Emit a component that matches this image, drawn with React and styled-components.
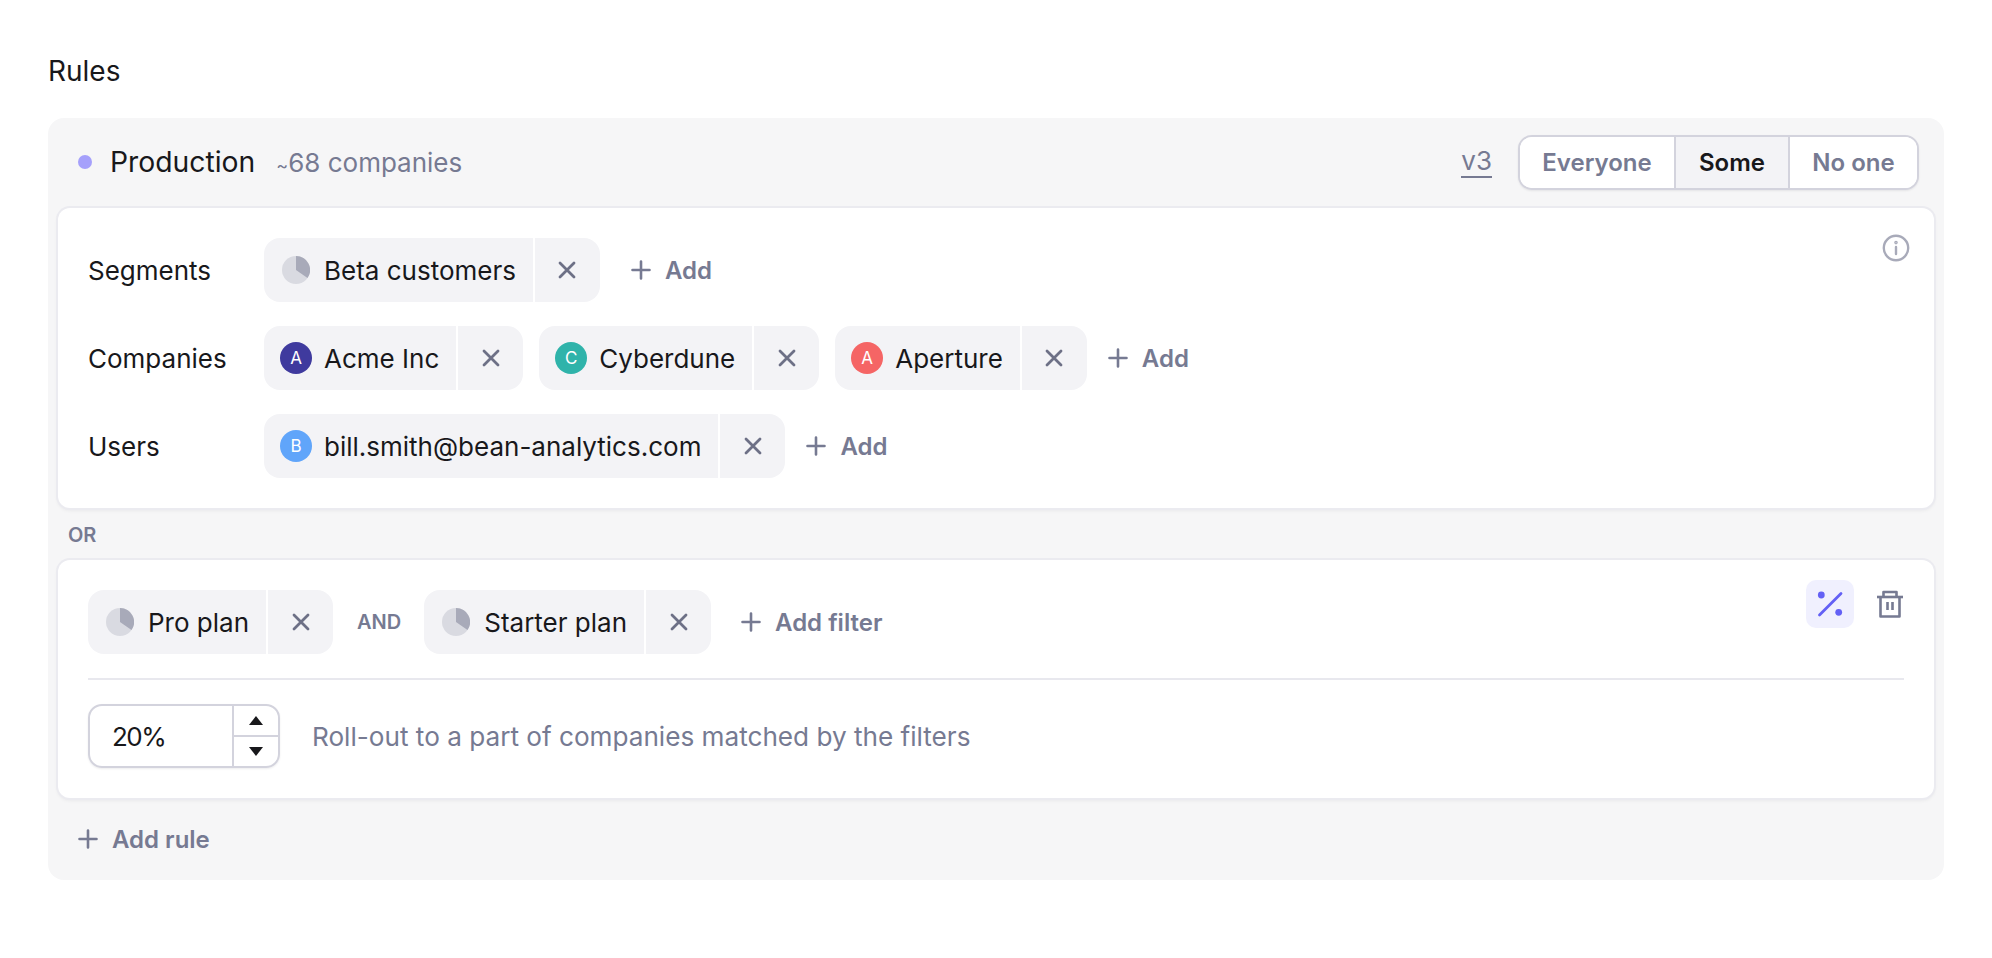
import React from 'react'
import styled, { createGlobalStyle } from 'styled-components'

const GlobalStyle = createGlobalStyle`
  body {
    margin: 0;
    background: #fff;
    font-family: 'Inter', 'Liberation Sans', sans-serif;
    color: #18181b;
  }
`

const XIcon = () => (
  <svg width="24" height="24" viewBox="0 0 24 24" fill="none" stroke="#6d7086" strokeWidth="2.8" strokeLinecap="round">
    <path d="M5 5 L19 19 M19 5 L5 19" />
  </svg>
)

const PlusIcon = () => (
  <svg width="24" height="24" viewBox="0 0 24 24" fill="none" stroke="#767a92" strokeWidth="2.6" strokeLinecap="round">
    <path d="M12 3.5 V20.5 M3.5 12 H20.5" />
  </svg>
)

const PieIcon = () => (
  <svg width="28" height="28" viewBox="0 0 28 28">
    <circle cx="14" cy="14" r="14" fill="#d9dae1" />
    <path d="M14 14 V0 A14 14 0 0 1 25.5 22 Z" fill="#a8aab9" />
  </svg>
)

const InfoIcon = () => (
  <svg width="28" height="28" viewBox="0 0 28 28" fill="none" stroke="#a8aab9" strokeWidth="2.4" strokeLinecap="round">
    <circle cx="14" cy="14" r="12.2" />
    <path d="M14 13 V20" />
    <circle cx="14" cy="8.6" r="0.6" fill="#a8aab9" />
  </svg>
)

const PercentIcon = () => (
  <svg width="28" height="28" viewBox="0 0 28 28" fill="none">
    <path d="M3.5 25 L25 3.5" stroke="#6360f5" strokeWidth="2.8" strokeLinecap="round" />
    <circle cx="5.3" cy="5" r="3.4" fill="#6360f5" />
    <circle cx="22.7" cy="22.3" r="3.4" fill="#6360f5" />
  </svg>
)

const TrashIcon = () => (
  <svg width="28" height="28" viewBox="0 0 28 28" fill="none" stroke="#767a92" strokeWidth="2.6" strokeLinejoin="round">
    <path d="M1 7 H27" />
    <path d="M7.5 7 V2 H20.5 V7" />
    <path d="M4.5 7 V26.5 H23.5 V7" />
    <path d="M11.5 12 V20 M16.5 12 V20" />
  </svg>
)

const Tag = ({ icon, letter, color, children }) => (
  <Chip>
    <ChipBody>
      {icon ? <PieSlot><PieIcon /></PieSlot> : <Avatar $color={color}>{letter}</Avatar>}
      {children}
    </ChipBody>
    <ChipClose><XIcon /></ChipClose>
  </Chip>
)

const AddLink = ({ children, $left }) => (
  <AddButton $left={$left}>
    <PlusIcon />
    {children}
  </AddButton>
)

const App = () => {
  return (
    <>
      <GlobalStyle />
      <Page>
        <Heading>Rules</Heading>
        <Panel>
          <PanelHeader>
            <Dot />
            <EnvName>Production</EnvName>
            <EnvCount><small>~</small>68 companies</EnvCount>
            <Version>v3</Version>
            <Segmented>
              <SegmentItem $width={154}>Everyone</SegmentItem>
              <SegmentItem $width={114} $active>Some</SegmentItem>
              <SegmentItem $width={129}>No one</SegmentItem>
            </Segmented>
          </PanelHeader>

          <Card>
            <TargetRow>
              <RowLabel>Segments</RowLabel>
              <Tag icon>Beta customers</Tag>
              <AddLink $left={13}>Add</AddLink>
              <InfoSlot><InfoIcon /></InfoSlot>
            </TargetRow>
            <TargetRow>
              <RowLabel>Companies</RowLabel>
              <Tag letter="A" color="#3f3a9e">Acme Inc</Tag>
              <Tag letter="C" color="#2fb3aa">Cyberdune</Tag>
              <Tag letter="A" color="#f56565">Aperture</Tag>
              <AddLink $left={3}>Add</AddLink>
            </TargetRow>
            <TargetRow>
              <RowLabel>Users</RowLabel>
              <Tag letter="B" color="#60a5fa">bill.smith@bean-analytics.com</Tag>
              <AddLink $left={3}>Add</AddLink>
            </TargetRow>
          </Card>

          <OrLabel>OR</OrLabel>

          <FilterCard>
            <FilterRow>
              <Tag icon>Pro plan</Tag>
              <AndLabel>AND</AndLabel>
              <Tag icon>Starter plan</Tag>
              <AddLink $left={12}>Add filter</AddLink>
              <Actions>
                <PercentButton><PercentIcon /></PercentButton>
                <TrashIcon />
              </Actions>
            </FilterRow>
            <Divider />
            <RolloutRow>
              <Stepper>
                <StepperValue>20%</StepperValue>
                <StepperArrows>
                  <StepperArrow><ArrowUp /></StepperArrow>
                  <StepperArrow><ArrowDown /></StepperArrow>
                </StepperArrows>
              </Stepper>
              <RolloutText>Roll-out to a part of companies matched by the filters</RolloutText>
            </RolloutRow>
          </FilterCard>

          <Footer>
            <AddLink>Add rule</AddLink>
          </Footer>
        </Panel>
      </Page>
    </>
  )
}

const Page = styled.main`
  padding: 53px 48px 0;
`
const Heading = styled.h2`
  margin: 0 0 29px;
  font-size: 28px;
  line-height: 36px;
  font-weight: 400;
`
const Panel = styled.section`
  background: #f6f6f7;
  border-radius: 16px;
  padding: 0 10px;
`
const PanelHeader = styled.header`
  height: 90px;
  display: flex;
  align-items: center;
  padding: 0 15px 2px 20px;
  box-sizing: border-box;
`
const Dot = styled.span`
  width: 14px;
  height: 14px;
  border-radius: 50%;
  background: #a5a0fb;
  margin-right: 18px;
`
const EnvName = styled.span`
  font-size: 28.3px;
  margin-right: 21px;
`
const EnvCount = styled.span`
  font-size: 26px;
  color: #767a92;
  small { font-size: 18px; }
`
const Version = styled.span`
  margin-left: auto;
  margin-right: 26px;
  font-size: 26px;
  line-height: 30px;
  color: #767a92;
  border-bottom: 2px solid #767a92;
`
const Segmented = styled.div`
  display: flex;
  height: 55px;
  border: 2px solid #d3d3dd;
  border-radius: 14px;
  overflow: hidden;
  background: #fff;
  box-sizing: border-box;
  box-shadow: 0 1px 2px rgba(24, 24, 40, 0.08);
`
const SegmentItem = styled.div`
  width: ${p => p.$width}px;
  flex: none;
  box-sizing: border-box;
  display: flex;
  align-items: center;
  justify-content: center;
  font-size: 24px;
  font-weight: 600;
  color: ${p => (p.$active ? '#18181b' : '#767a92')};
  background: ${p => (p.$active ? '#f3f3f6' : '#fff')};
  & + & { border-left: 2px solid #d3d3dd; }
`
const Card = styled.div`
  background: #fff;
  border-radius: 12px;
  box-shadow: 0 0 0 2px #ebebf0, 0 2px 4px rgba(24, 24, 40, 0.08);
  padding: 30px;
  display: flex;
  flex-direction: column;
  gap: 24px;
`
const TargetRow = styled.div`
  display: flex;
  align-items: center;
  gap: 16px;
`
const RowLabel = styled.span`
  width: 160px;
  font-size: 26px;
`
const Chip = styled.div`
  display: flex;
  height: 64px;
  gap: 2px;
  border-radius: 16px;
  overflow: hidden;
  font-size: 26px;
  white-space: nowrap;
`
const ChipBody = styled.div`
  display: flex;
  align-items: center;
  gap: 12px;
  padding: 0 17px 0 16px;
  background: #f3f3f6;
`
const ChipClose = styled.div`
  width: 65px;
  display: flex;
  align-items: center;
  justify-content: center;
  background: #f3f3f6;
`
const PieSlot = styled.span`
  display: flex;
  margin: 0 2px 0 2px;
`
const Avatar = styled.span`
  width: 32px;
  height: 32px;
  border-radius: 50%;
  background: ${p => p.$color};
  color: #fff;
  font-size: 17px;
  display: flex;
  align-items: center;
  justify-content: center;
`
const AddButton = styled.span`
  display: flex;
  align-items: center;
  gap: 12px;
  margin-left: ${p => p.$left || 0}px;
  font-size: 24px;
  font-weight: 600;
  color: #767a92;
`
const InfoSlot = styled.span`
  display: flex;
  margin-left: auto;
  margin-right: -6px;
  align-self: flex-start;
  margin-top: -4px;
`
const OrLabel = styled.div`
  height: 52px;
  box-sizing: border-box;
  padding: 2px 0 0 10px;
  display: flex;
  align-items: center;
  font-size: 20px;
  font-weight: 600;
  color: #767a92;
`
const FilterCard = styled(Card)`
  gap: 0;
`
const FilterRow = styled.div`
  display: flex;
  align-items: center;
  height: 64px;
  gap: 16px;
`
const AndLabel = styled.span`
  font-size: 20px;
  font-weight: 600;
  color: #767a92;
  margin: 0 7px 0 8px;
`
const Actions = styled.div`
  margin-left: auto;
  align-self: flex-start;
  margin-top: -10px;
  display: flex;
  align-items: center;
  gap: 22px;
`
const PercentButton = styled.span`
  width: 48px;
  height: 48px;
  border-radius: 10px;
  background: #f0f0fe;
  display: flex;
  align-items: center;
  justify-content: center;
`
const Divider = styled.div`
  height: 2px;
  margin: 24px 0;
  background: #e8e8ee;
`
const RolloutRow = styled.div`
  display: flex;
  align-items: center;
  gap: 32px;
`
const Stepper = styled.div`
  width: 192px;
  height: 64px;
  box-sizing: border-box;
  display: flex;
  border: 2px solid #d3d3dd;
  border-radius: 14px;
  overflow: hidden;
  box-shadow: 0 1px 2px rgba(24, 24, 40, 0.08);
`
const StepperValue = styled.div`
  flex: 1;
  display: flex;
  align-items: center;
  padding-left: 22px;
  font-size: 26px;
  letter-spacing: -1.5px;
`
const StepperArrows = styled.div`
  width: 46px;
  box-sizing: border-box;
  border-left: 2px solid #d3d3dd;
  display: flex;
  flex-direction: column;
`
const StepperArrow = styled.div`
  flex: 1;
  display: flex;
  align-items: center;
  justify-content: center;
  & + & { border-top: 2px solid #d3d3dd; }
`
const ArrowUp = styled.span`
  width: 0;
  height: 0;
  border-left: 7px solid transparent;
  border-right: 7px solid transparent;
  border-bottom: 9px solid #18181b;
`
const ArrowDown = styled.span`
  width: 0;
  height: 0;
  border-left: 7px solid transparent;
  border-right: 7px solid transparent;
  border-top: 9px solid #18181b;
`
const RolloutText = styled.span`
  font-size: 26.15px;
  color: #767a92;
`
const Footer = styled.div`
  height: 82px;
  display: flex;
  align-items: center;
  padding-left: 18px;
`

export default App
